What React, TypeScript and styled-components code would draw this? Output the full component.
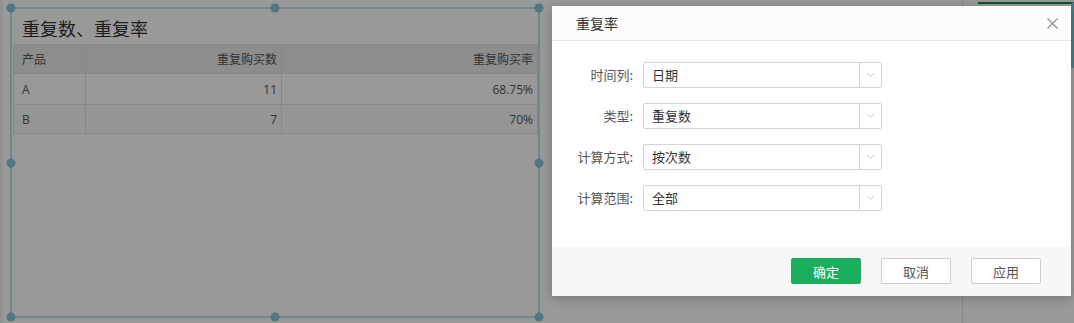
import React from "react";
import styled, { createGlobalStyle } from "styled-components";

const GlobalStyle = createGlobalStyle`
  html, body { margin: 0; padding: 0; }
  body {
    font-family: "Open Sans", "Noto Sans CJK SC", sans-serif;
    background: #fff;
  }
  * { box-sizing: border-box; }
`;

const Page = styled.div`
  position: relative;
  width: 1074px;
  height: 323px;
  overflow: hidden;
  display: flex;
  background: #fff;
`;

const Canvas = styled.div`
  flex: 1;
  display: flex;
  align-items: flex-start;
  padding: 7px 0 0 10px;
  border-left: 3px solid #f4f4f4;
  margin-left: 0;
`;

const SidePanel = styled.div`
  width: 112px;
  border-left: 1px solid #e6e6e6;
  padding: 2px 0 0 15px;
`;

const SideTab = styled.div`
  height: 66px;
  border-top: 2px solid #1d8a4c;
  border-right: 3px solid #86cfd9;
  background: #fff;
`;

const Frame = styled.div`
  position: relative;
  width: 530px;
  height: 311px;
  margin-left: -3px;
  border: 2px solid #b9e3ef;
  padding: 7px 0 0 1px;
`;

const Handle = styled.span<{ $x: "l" | "c" | "r"; $y: "t" | "m" | "b" }>`
  position: absolute;
  width: 9px;
  height: 9px;
  border-radius: 50%;
  background: #84c9dc;
  left: ${(p) => (p.$x === "l" ? "-1px" : p.$x === "c" ? "50%" : "calc(100% + 1px)")};
  top: ${(p) => (p.$y === "t" ? "-1px" : p.$y === "m" ? "50%" : "calc(100% + 1px)")};
  transform: translate(-50%, -50%);
`;

const Title = styled.div`
  height: 24px;
  line-height: 24px;
  padding-left: 9px;
  font-family: "Noto Sans CJK SC", sans-serif;
  font-size: 18px;
  color: #333;
  margin-bottom: 4px;
`;

const Table = styled.div`
  width: 525px;
  border-top: 1px solid #e2e2e2;
  border-left: 1px solid #e2e2e2;
`;

const Row = styled.div<{ $head?: boolean; $alt?: boolean }>`
  display: grid;
  grid-template-columns: 72px 196px 1fr;
  height: ${(p) => (p.$head ? 29 : p.$alt ? 29 : 31)}px;
  background: ${(p) => (p.$head ? "#ececec" : p.$alt ? "#f8f8f8" : "#fff")};
`;

const Cell = styled.div<{ $right?: boolean }>`
  display: flex;
  align-items: center;
  justify-content: ${(p) => (p.$right ? "flex-end" : "flex-start")};
  padding: ${(p) => (p.$right ? "0 4px 0 0" : "0 0 0 8px")};
  border-right: 1px solid #e2e2e2;
  border-bottom: 1px solid #e2e2e2;
  font-family: "Open Sans", "Noto Sans CJK SC", sans-serif;
  font-size: 12px;
  color: #555;
`;

const Overlay = styled.div`
  position: absolute;
  inset: 0;
  background: rgba(0, 0, 0, 0.4);
`;

const Dialog = styled.div`
  position: absolute;
  left: 552px;
  top: 6px;
  width: 519px;
  height: 290px;
  background: #fff;
  display: flex;
  flex-direction: column;
  box-shadow: 0 2px 10px rgba(0, 0, 0, 0.25);
  font-family: "Noto Sans CJK SC", sans-serif;
`;

const DialogHeader = styled.div`
  height: 35px;
  flex-shrink: 0;
  display: flex;
  align-items: center;
  justify-content: space-between;
  padding: 0 13px 0 24px;
  background: #fcfcfc;
  border-bottom: 1px solid #e6e6e6;
`;

const DialogTitle = styled.div`
  font-size: 14px;
  color: #333;
`;

const CloseButton = styled.button`
  border: 0;
  padding: 0;
  background: transparent;
  width: 11px;
  height: 11px;
  display: flex;
  cursor: pointer;
`;

const DialogBody = styled.div`
  flex: 1;
  display: flex;
  flex-direction: column;
  gap: 16px;
  padding-top: 21px;
`;

const FormRow = styled.div`
  display: flex;
  align-items: center;
  height: 25px;
`;

const Label = styled.div`
  width: 81px;
  text-align: right;
  font-size: 13px;
  color: #555;
  margin-right: 10px;
`;

const Select = styled.div`
  width: 239px;
  height: 26px;
  border: 1px solid #d4d4d4;
  border-radius: 2px;
  display: flex;
`;

const SelectValue = styled.div`
  flex: 1;
  display: flex;
  align-items: center;
  padding-left: 8px;
  font-size: 13px;
  color: #333;
`;

const SelectArrow = styled.div`
  width: 22px;
  border-left: 1px solid #d4d4d4;
  display: flex;
  align-items: center;
  justify-content: center;
`;

const DialogFooter = styled.div`
  height: 50px;
  flex-shrink: 0;
  display: flex;
  justify-content: flex-end;
  align-items: center;
  gap: 20px;
  padding-right: 30px;
  background: #f8f8f8;
`;

const Button = styled.button<{ $primary?: boolean }>`
  width: 70px;
  height: 26px;
  border-radius: 2px;
  font-family: "Noto Sans CJK SC", sans-serif;
  font-size: 13px;
  padding: 0;
  cursor: pointer;
  border: 1px solid ${(p) => (p.$primary ? "#1aaf5d" : "#cccccc")};
  background: ${(p) => (p.$primary ? "#1aaf5d" : "#fff")};
  color: ${(p) => (p.$primary ? "#fff" : "#555")};
`;

const Chevron = () => (
  <svg width="9" height="6" viewBox="0 0 9 6">
    <polyline points="1,1 4.5,4.5 8,1" fill="none" stroke="#c2c2c2" strokeWidth="1" />
  </svg>
);

const CloseIcon = () => (
  <svg width="11" height="11" viewBox="0 0 11 11">
    <path d="M0.5 0.5 L10.5 10.5 M10.5 0.5 L0.5 10.5" stroke="#8a8a8a" strokeWidth="1.1" />
  </svg>
);

const rows = [
  { p: "A", n: "11", r: "68.75%" },
  { p: "B", n: "7", r: "70%" },
];

const fields = [
  { label: "时间列:", value: "日期" },
  { label: "类型:", value: "重复数" },
  { label: "计算方式:", value: "按次数" },
  { label: "计算范围:", value: "全部" },
];

export default function App() {
  return (
    <>
      <GlobalStyle />
      <Page>
        <Canvas>
          <Frame>
            <Title>重复数、重复率</Title>
            <Table>
              <Row $head>
                <Cell>产品</Cell>
                <Cell $right>重复购买数</Cell>
                <Cell $right>重复购买率</Cell>
              </Row>
              {rows.map((r, i) => (
                <Row key={r.p} $alt={i === 1}>
                  <Cell>{r.p}</Cell>
                  <Cell $right>{r.n}</Cell>
                  <Cell $right>{r.r}</Cell>
                </Row>
              ))}
            </Table>
            <Handle $x="l" $y="t" />
            <Handle $x="c" $y="t" />
            <Handle $x="r" $y="t" />
            <Handle $x="l" $y="m" />
            <Handle $x="r" $y="m" />
            <Handle $x="l" $y="b" />
            <Handle $x="c" $y="b" />
            <Handle $x="r" $y="b" />
          </Frame>
        </Canvas>
        <SidePanel>
          <SideTab />
        </SidePanel>
        <Overlay />
        <Dialog>
          <DialogHeader>
            <DialogTitle>重复率</DialogTitle>
            <CloseButton aria-label="close">
              <CloseIcon />
            </CloseButton>
          </DialogHeader>
          <DialogBody>
            {fields.map((f) => (
              <FormRow key={f.label}>
                <Label>{f.label}</Label>
                <Select>
                  <SelectValue>{f.value}</SelectValue>
                  <SelectArrow>
                    <Chevron />
                  </SelectArrow>
                </Select>
              </FormRow>
            ))}
          </DialogBody>
          <DialogFooter>
            <Button $primary>确定</Button>
            <Button>取消</Button>
            <Button>应用</Button>
          </DialogFooter>
        </Dialog>
      </Page>
    </>
  );
}
